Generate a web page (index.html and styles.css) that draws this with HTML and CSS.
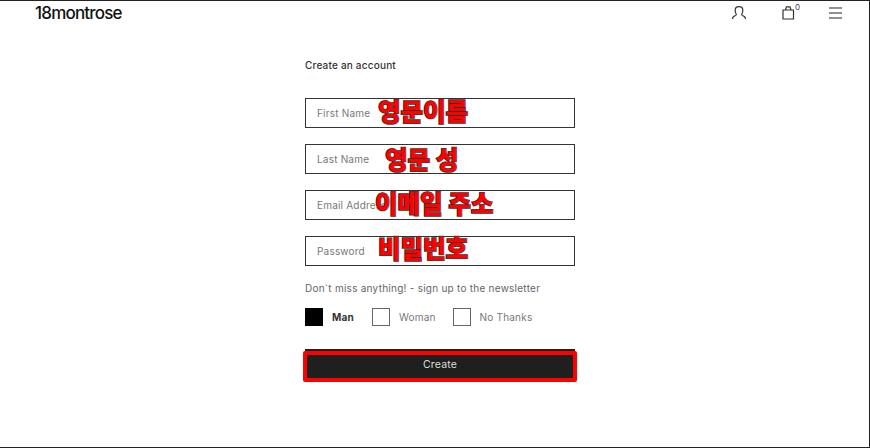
FILE: index.html
```html
<!DOCTYPE html>
<html>
<head>
    <title>Create an account - 18montrose</title>
    <link rel="stylesheet" href="styles.css">
</head>
<body>
    <div class="page">
        <header class="topbar">
            <div class="logo">18montrose</div>
            <nav class="icons">
                <svg class="icon-user" width="16" height="16" viewBox="0 0 16 16" fill="none" stroke="#333" stroke-width="1.2">
                    <path d="M1.500 14c0-2 1.500-3 3-3.500.8-.3 1-.8.6-1.500C4.400 7.800 4.200 6.500 4.200 5.200 4.200 2.800 5.800 1.600 8 1.600s3.800 1.200 3.800 3.600c0 1.300-.2 2.600-.9 3.800-.4.7-.2 1.200.6 1.500 1.500.5 3 1.500 3 3.500"/>
                </svg>
                <div class="bag">
                    <svg width="13" height="16" viewBox="0 0 13 16" fill="none" stroke="#333" stroke-width="1.2">
                        <path d="M1 5h10.500v9H1z"/>
                        <path d="M3.500 5l1-3.200h3.500l1 3.200"/>
                    </svg>
                    <span class="bag-count">0</span>
                </div>
                <svg class="icon-menu" width="13" height="12" viewBox="0 0 13 12" fill="none" stroke="#222" stroke-width="1.2">
                    <path d="M0 1h13M0 6h13M0 11h13"/>
                </svg>
            </nav>
        </header>

        <form class="signup">
            <h1>Create an account</h1>

            <div class="field">
                <input type="text" placeholder="First Name">
                <span class="note note-first">영문이름</span>
            </div>
            <div class="field">
                <input type="text" placeholder="Last Name">
                <span class="note note-last">영문 성</span>
            </div>
            <div class="field">
                <input type="text" placeholder="Email Address">
                <span class="note note-email">이메일 주소</span>
            </div>
            <div class="field">
                <input type="password" placeholder="Password">
                <span class="note note-password">비밀번호</span>
            </div>

            <p class="newsletter">Don`t miss anything! - sign up to the newsletter</p>

            <div class="choices">
                <div class="choice selected"><span class="box"></span>Man</div>
                <div class="choice"><span class="box"></span>Woman</div>
                <div class="choice"><span class="box"></span>No Thanks</div>
            </div>

            <div class="create-wrap">
                <button type="button" class="create">Create</button>
            </div>
        </form>
    </div>
</body>
</html>
```

FILE: styles.css
```css
html, body {
    margin: 0;
    height: 100%;
    overflow: hidden;
}
body {
    font-family: Inter, "Liberation Sans", sans-serif;
    background: #fff;
    color: #222;
}
.page {
    box-sizing: border-box;
    height: 448px;
    border-top: 1px solid #222;
    border-right: 1px solid #222;
    border-bottom: 1px solid #222;
}
.topbar {
    display: flex;
    justify-content: space-between;
    align-items: flex-start;
    height: 50px;
    padding: 3px 27px 0 35px;
}
.logo {
    font-size: 17px;
    font-weight: 500;
    letter-spacing: -0.8px;
    line-height: 18px;
    color: #111;
}
.icons {
    display: flex;
    align-items: flex-start;
    padding-top: 1px;
}
.icon-user {
    margin-right: 35px;
}
.bag {
    position: relative;
    width: 13px;
    height: 16px;
    margin-right: 34px;
}
.bag-count {
    position: absolute;
    top: -3px;
    left: 13px;
    font-size: 8px;
    line-height: 10px;
    color: #445;
}
.icon-menu {
    margin-top: 2px;
}
.signup {
    width: 270px;
    margin-left: 305px;
}
h1 {
    margin: 0 0 22px;
    font-size: 10px;
    font-weight: 500;
    line-height: 22px;
    letter-spacing: 0.2px;
    color: #333;
}
.field {
    position: relative;
    height: 30px;
    margin-bottom: 16px;
}
.field input {
    box-sizing: border-box;
    width: 100%;
    height: 30px;
    padding: 0 11px;
    border: 1px solid #333;
    border-radius: 0;
    outline: none;
    font-family: inherit;
    font-size: 10px;
    letter-spacing: 0.2px;
}
.field input::placeholder {
    color: #777;
    opacity: 1;
}
.note {
    position: absolute;
    font-family: "Noto Sans CJK KR", sans-serif;
    font-size: 24.5px;
    font-weight: 900;
    line-height: 30px;
    white-space: nowrap;
    color: #f00;
    -webkit-text-stroke: 1.5px #333;
    paint-order: stroke fill;
}
.note-first {
    top: -2px;
    left: 73px;
}
.note-last {
    top: 0;
    left: 80px;
}
.note-email {
    top: -2px;
    left: 70px;
}
.note-password {
    top: -3px;
    left: 73px;
}
.newsletter {
    margin: -1px 0 13px;
    font-size: 10px;
    line-height: 14px;
    letter-spacing: 0.25px;
    color: #666;
}
.choices {
    display: flex;
    gap: 17px;
    margin-bottom: 23px;
}
.choice {
    display: flex;
    align-items: center;
    gap: 9px;
    height: 18px;
    font-size: 10px;
    letter-spacing: 0.2px;
    color: #777;
}
.box {
    box-sizing: border-box;
    width: 18px;
    height: 18px;
    border: 1.5px solid #666;
}
.choice.selected {
    margin-right: 1px;
    font-weight: 700;
    color: #333;
}
.choice.selected .box {
    background: #000;
    border-color: #000;
}
.create-wrap {
    position: relative;
}
.create-wrap::after {
    content: "";
    position: absolute;
    top: 2px;
    left: -2px;
    right: -2px;
    height: 31px;
    box-sizing: border-box;
    border: 4px solid #f00;
    border-radius: 2px;
    pointer-events: none;
}
.create {
    display: block;
    width: 100%;
    height: 30px;
    border: none;
    border-radius: 0;
    background: #1f1f1f;
    color: #ddd;
    font-family: inherit;
    font-size: 10.5px;
    letter-spacing: 0.2px;
}
```
